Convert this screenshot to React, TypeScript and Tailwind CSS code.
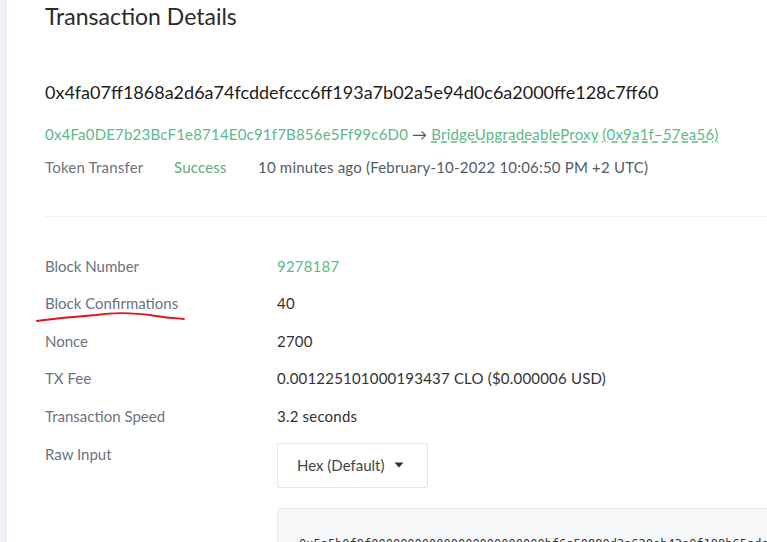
const rows = [
  { label: 'Block Number', value: '9278187', green: true },
  { label: 'Block Confirmations', value: '40', mark: true },
  { label: 'Nonce', value: '2700' },
  { label: 'TX Fee', value: '0.001225101000193437 CLO ($0.000006 USD)' },
  { label: 'Transaction Speed', value: '3.2 seconds' },
];

function RedMark() {
  return (
    <svg className="absolute left-[-9px] top-[19px] pointer-events-none" width="152" height="14" viewBox="0 0 152 14">
      <path
        d="M1 10 C 20 7, 40 6, 60 4 C 80 1, 100 2, 120 5 C 132 7, 140 7, 148 8"
        fill="none"
        stroke="#e0141c"
        strokeWidth="1.8"
        strokeLinecap="round"
      />
    </svg>
  );
}

export default function App() {
  return (
    <div className="flex h-[542px] w-full overflow-hidden bg-white font-['Lato',sans-serif]">
      <div className="w-[7px] shrink-0 bg-[#eef0f6]" />
      <div className="flex-1 min-w-0 pl-[38px]">
        <h1 className="pt-[1px] text-[23px] leading-[30px] text-[#2b2b2b]">Transaction Details</h1>

        <div className="mt-[48px] text-[18px] leading-[26px] text-[#1c1c1c] whitespace-nowrap">
          0x4fa07ff1868a2d6a74fcddefccc6ff193a7b02a5e94d0c6a2000ffe128c7ff60
        </div>

        <div className="mt-[19px] text-[15px] leading-[20px] tracking-[0.2px] whitespace-nowrap">
          <span className="text-[#5bb98b]">0x4Fa0DE7b23BcF1e8714E0c91f7B856e5Ff99c6D0</span>
          <span className="text-[#555]"> → </span>
          <span className="text-[#5bb98b] underline decoration-dashed underline-offset-2">BridgeUpgradeableProxy (0x9a1f–57ea56)</span>
        </div>

        <div className="mt-[13px] flex items-center text-[15px] leading-[20px] tracking-[0.2px] whitespace-nowrap">
          <span className="w-[129px] text-[#6c737d]">Token Transfer</span>
          <span className="w-[84px] text-[#5ea97f]">Success</span>
          <span className="text-[#555b63]">10 minutes ago (February-10-2022 10:06:50 PM +2 UTC)</span>
        </div>

        <div className="mt-[39px] h-px bg-[#eeeff1]" />

        <div className="mt-[30px] text-[15px]">
          {rows.map((r) => (
            <div key={r.label} className="flex h-[37.6px] items-center whitespace-nowrap">
              <div className="relative w-[232px] shrink-0 text-[#6c737d]">
                {r.label}
                {r.mark && <RedMark />}
              </div>
              <div className={r.green ? 'tracking-[0.2px] text-[#5bb98b]' : 'tracking-[0.2px] text-[#333]'}>{r.value}</div>
            </div>
          ))}
          <div className="flex whitespace-nowrap">
            <div className="w-[232px] shrink-0 pt-[8px] text-[#6c737d]">Raw Input</div>
            <div className="flex-1 min-w-0 pt-[8px]">
              <button className="flex h-[45px] w-[151px] items-center gap-[10px] rounded-[2px] border border-[#e3e5e8] bg-white pl-[19px] text-[#444]">
                <span>Hex (Default)</span>
                <svg width="10" height="6" viewBox="0 0 10 6">
                  <path d="M0.5 0.5 L9.5 0.5 L5 5.5 Z" fill="#333" />
                </svg>
              </button>
              <div className="mt-[20px] w-[560px] rounded-[4px] border border-[#e6e8eb] bg-[#f6f7f9] px-[21px] pt-[26px] pb-4 font-['DejaVu_Sans_Mono',monospace] text-[12px] text-[#333]">
                0x5a5b0f8f000000000000000000000000bf6a50880d3a620eb43a0f188b65ade
              </div>
            </div>
          </div>
        </div>
      </div>
    </div>
  );
}
